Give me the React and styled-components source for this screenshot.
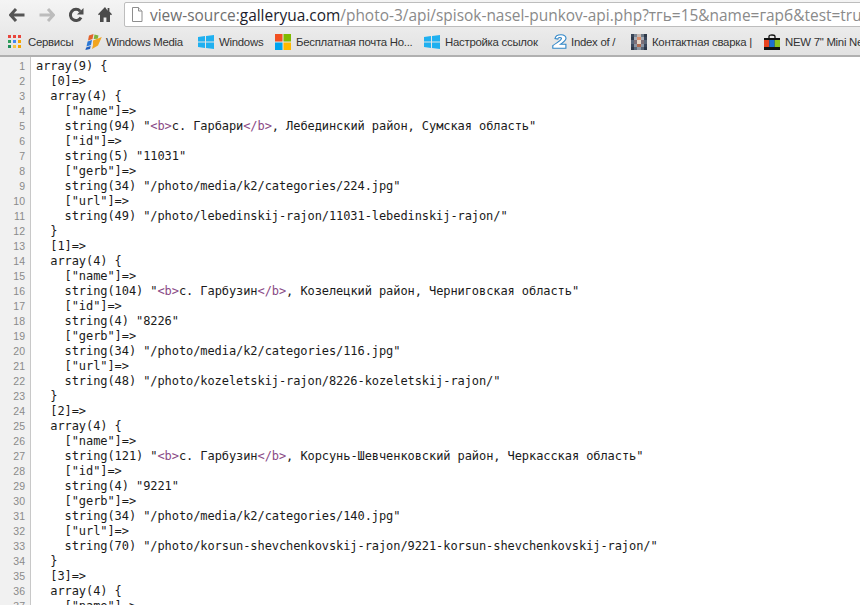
import React from 'react';
import styled, { createGlobalStyle } from 'styled-components';

const GlobalStyle = createGlobalStyle`
  html, body {
    margin: 0;
    padding: 0;
    width: 860px;
    height: 605px;
    overflow: hidden;
    background: #fff;
  }
`;

const Page = styled.div`
  width: 860px;
  height: 605px;
  overflow: hidden;
  display: flex;
  flex-direction: column;
`;

const Toolbar = styled.div`
  height: 28px;
  flex: none;
  display: flex;
  align-items: center;
  padding: 1px 0 0 9px;
  box-sizing: border-box;
  background: linear-gradient(#f4f4f4, #ebebeb);
`;

const NavButton = styled.div`
  width: ${p => p.$width}px;
  height: 18px;
  flex: none;
  display: flex;
  align-items: center;
  svg { display: block; }
`;

const AddressBar = styled.div`
  flex: none;
  width: 760px;
  height: 25px;
  margin-left: 3px;
  box-sizing: border-box;
  background: #fff;
  border: 1px solid #bdbdbd;
  border-radius: 2px;
  display: flex;
  align-items: center;
  padding-left: 6px;
  gap: 7px;
  overflow: hidden;
`;

const Url = styled.div`
  font-family: "Open Sans", sans-serif;
  font-size: 15.45px;
  white-space: nowrap;
  color: #8a8a8a;
`;

const Scheme = styled.span`
  color: #6f6f6f;
`;

const Host = styled.span`
  color: #1c1c2c;
`;

const BookmarksBar = styled.div`
  height: 29px;
  flex: none;
  display: flex;
  align-items: center;
  padding-left: 8px;
  box-sizing: border-box;
  background: linear-gradient(#ebebeb, #e2e2e2);
  border-bottom: 2px solid #b0b0b0;
`;

const Bookmark = styled.div`
  width: ${p => p.$width}px;
  flex: none;
  display: flex;
  align-items: center;
  gap: ${p => p.$gap ?? 5}px;
  white-space: nowrap;
  font-family: "Liberation Sans", sans-serif;
  font-size: 11.4px;
  letter-spacing: -0.27px;
  color: #333;
  svg { display: block; flex: none; }
`;

const Source = styled.div`
  flex: 1;
  min-height: 0;
  overflow: hidden;
  background: linear-gradient(to right, #f1f1f1 30px, #fff 30px);
`;

const Line = styled.div`
  display: flex;
  height: 15px;
  line-height: 15px;
  &:first-child > * { padding-top: 2px; height: 17px; box-sizing: border-box; }
  &:first-child { height: 17px; }
`;

const LineNumber = styled.div`
  width: 31px;
  flex: none;
  box-sizing: border-box;
  padding-right: 5px;
  border-right: 1px solid #c8c8c8;
  text-align: right;
  font-family: "Liberation Sans", sans-serif;
  font-size: 10.5px;
  color: #8a8a8a;
`;

const Code = styled.pre`
  margin: 0;
  padding-left: 5px;
  font-family: "DejaVu Sans Mono", monospace;
  font-size: 12px;
  letter-spacing: -0.08px;
  line-height: 15px;
  color: #1a1a1a;
  white-space: pre;
`;

const Tag = styled.span`
  color: #8a4a86;
`;

const BackIcon = ({ color }) => (
  <svg width="16" height="14" viewBox="0 0 16 14">
    <path d="M7 1 1.5 7 7 13M2 7h13.5" fill="none" stroke={color} strokeWidth="3" />
  </svg>
);

const ForwardIcon = ({ color }) => (
  <svg width="16" height="14" viewBox="0 0 16 14">
    <path d="M9 1l5.5 6L9 13M14 7H.5" fill="none" stroke={color} strokeWidth="3" />
  </svg>
);

const ReloadIcon = () => (
  <svg width="16" height="16" viewBox="0 0 16 16">
    <path d="M13 10.5A5.6 5.6 0 1 1 12.2 4.2" fill="none" stroke="#4d4d4d" strokeWidth="3" />
    <path d="M9 7.5h6.5V1z" fill="#4d4d4d" />
  </svg>
);

const HomeIcon = () => (
  <svg width="14" height="15" viewBox="0 0 14 15">
    <path d="M7 0 0 7.2l1 1L2 7.4V15h3.6v-4.6h2.8V15H12V7.4l1 .8 1-1-2.6-2.7V1H9.6v2.700z" fill="#4a4a4a" />
  </svg>
);

const PageIcon = () => (
  <svg width="12" height="15" viewBox="0 0 12 15">
    <path d="M1.5.5h6l3.5 3.5v10.5H1.5z" fill="#fff" stroke="#8e8e8e" />
    <path d="M7.500.5V4H11" fill="#eee" stroke="#8e8e8e" />
  </svg>
);

const AppsIcon = () => {
  const colors = ['#e8453c', '#e8453c', '#e8453c', '#2f9e5a', '#4285f4', '#f4a400', '#1f8f58', '#f6c344', '#f4a400'];
  return (
    <svg width="13" height="13" viewBox="0 0 13 13" shapeRendering="crispEdges">
      {colors.map((c, i) => (
        <rect key={i} x={(i % 3) * 5} y={Math.floor(i / 3) * 5} width="3" height="3" fill={c} />
      ))}
    </svg>
  );
};

const MediaIcon = () => (
  <svg width="17" height="16" viewBox="0 0 17 16">
    <path d="M4 1.500 8.500 0 7.500 5 3 6.500z" fill="#e2622b" />
    <path d="M9.500.5l4 1-.8 3.200L8.700 5z" fill="#7fb23a" />
    <path d="M2.600 7.500 7 6 6 11 1.500 12.500z" fill="#2a78d6" />
    <path d="M1.200 13.500 5.700 12 5 15 .4 16z" fill="#1f5fbf" />
    <path d="M8 6.500 16.800 3 13 11.500 7 15l1-4z" fill="#f2a51f" />
  </svg>
);

const WindowsIcon = () => (
  <svg width="16" height="14" viewBox="0 0 16 14">
    <path d="M0 2 7 1v5.500H0zM8 .9 16 0v6.500H8zM0 7.500h7V13l-7-1zM8 7.500h8V14l-8-1z" fill="#1fb0f0" />
  </svg>
);

const MailIcon = () => (
  <svg width="16" height="16" viewBox="0 0 16 16">
    <rect width="7.500" height="7.500" fill="#f25022" />
    <rect x="8.500" width="7.500" height="7.500" fill="#7fba00" />
    <rect y="8.500" width="7.500" height="7.500" fill="#00a4ef" />
    <rect x="8.500" y="8.500" width="7.500" height="7.500" fill="#ffb900" />
  </svg>
);

const IndexIcon = () => (
  <svg width="15" height="15" viewBox="0 0 15 15">
    <path d="M3 4.500C3.500 1.500 6 .7 9 .7c3.500 0 5 1.800 5 3.600 0 2.200-2.500 3.700-5.500 6h5.400v3.900H.8v-2.500C4 9 9.500 6.500 9.500 4.600c0-1.600-3.500-1.500-3.700.4z" fill="#fff" stroke="#2f86c8" strokeWidth="1.100" />
  </svg>
);

const PhotoIcon = () => {
  const cells = [
    '#3a4658', '#7d8794', '#c8b8b0', '#6e7a88', '#2f3a4a',
    '#2f3a4c', '#a8aeb8', '#d88f6e', '#a8aeb8', '#39455a',
    '#59667a', '#7c6f78', '#e6d6c8', '#7c6f78', '#5a6678',
    '#39455a', '#8c96a4', '#b06a50', '#8c96a4', '#39455a',
    '#2c3648', '#5a6678', '#8f98a4', '#5a6678', '#2c3648',
  ];
  return (
    <svg width="16" height="16" viewBox="0 0 15 15" shapeRendering="crispEdges">
      {cells.map((c, i) => (
        <rect key={i} x={(i % 5) * 3} y={Math.floor(i / 5) * 3} width="3" height="3" fill={c} />
      ))}
    </svg>
  );
};

const BagIcon = () => (
  <svg width="16" height="16" viewBox="0 0 16 16">
    <path d="M5 5V2.500C5 1.200 6.200 1 8 1s3 .2 3 1.500V5" fill="none" stroke="#111" strokeWidth="1.300" />
    <rect y="4" width="16" height="12" fill="#111" />
    <rect y="6" width="5.300" height="7" fill="#e8431f" />
    <rect x="5.300" y="6" width="5.400" height="7" fill="#1d6fd0" />
    <rect x="10.700" y="6" width="5.300" height="7" fill="#8cc21f" />
  </svg>
);

const bookmarks = [
  { icon: <AppsIcon />, label: 'Сервисы', width: 77, gap: 7 },
  { icon: <MediaIcon />, label: 'Windows Media', width: 113, gap: 4 },
  { icon: <WindowsIcon />, label: 'Windows', width: 77 },
  { icon: <MailIcon />, label: 'Бесплатная почта Но...', width: 149 },
  { icon: <WindowsIcon />, label: 'Настройка ссылок', width: 128 },
  { icon: <IndexIcon />, label: 'Index of /', width: 79, gap: 4 },
  { icon: <PhotoIcon />, label: 'Контактная сварка |', width: 133 },
  { icon: <BagIcon />, label: 'NEW 7" Mini Ne', width: 96 },
];

const entry = (index, len, name, id, gerbLen, gerb, url, urlLen) => [
  `  [${index}]=>`,
  '  array(4) {',
  '    ["name"]=>',
  { len, name },
  '    ["id"]=>',
  `    string(${String(id).length}) "${id}"`,
  '    ["gerb"]=>',
  `    string(${gerbLen}) "/photo/media/k2/categories/${gerb}.jpg"`,
  '    ["url"]=>',
  `    string(${urlLen}) "${url}"`,
  '  }',
];

const lines = [
  'array(9) {',
  ...entry(0, 94, ['с. Гарбари', ', Лебединский район, Сумская область"'], 11031, 34, 224, '/photo/lebedinskij-rajon/11031-lebedinskij-rajon/', 49),
  ...entry(1, 104, ['с. Гарбузин', ', Козелецкий район, Черниговская область"'], 8226, 34, 116, '/photo/kozeletskij-rajon/8226-kozeletskij-rajon/', 48),
  ...entry(2, 121, ['с. Гарбузин', ', Корсунь-Шевченковский район, Черкасская область"'], 9221, 34, 140, '/photo/korsun-shevchenkovskij-rajon/9221-korsun-shevchenkovskij-rajon/', 70),
  '  [3]=>',
  '  array(4) {',
  '    ["name"]=>',
];

export default function App() {
  return (
    <Page>
      <GlobalStyle />
      <Toolbar>
        <NavButton $width={30}><BackIcon color="#555" /></NavButton>
        <NavButton $width={29}><ForwardIcon color="#bcbcbc" /></NavButton>
        <NavButton $width={30}><ReloadIcon /></NavButton>
        <NavButton $width={23}><HomeIcon /></NavButton>
        <AddressBar>
          <PageIcon />
          <Url>
            <Scheme>view-source:</Scheme>
            <Host>galleryua.com</Host>
            /photo-3/api/spisok-nasel-punkov-api.php?тгь=15&amp;name=гарб&amp;test=tru
          </Url>
        </AddressBar>
      </Toolbar>
      <BookmarksBar>
        {bookmarks.map(b => (
          <Bookmark key={b.label} $width={b.width} $gap={b.gap}>
            {b.icon}
            <span>{b.label}</span>
          </Bookmark>
        ))}
      </BookmarksBar>
      <Source>
        {lines.map((line, i) => (
          <Line key={i}>
            <LineNumber>{i + 1}</LineNumber>
            {typeof line === 'string' ? (
              <Code>{line}</Code>
            ) : (
              <Code>
                {`    string(${line.len}) "`}
                <Tag>&lt;b&gt;</Tag>
                {line.name[0]}
                <Tag>&lt;/b&gt;</Tag>
                {line.name[1]}
              </Code>
            )}
          </Line>
        ))}
      </Source>
    </Page>
  );
}
